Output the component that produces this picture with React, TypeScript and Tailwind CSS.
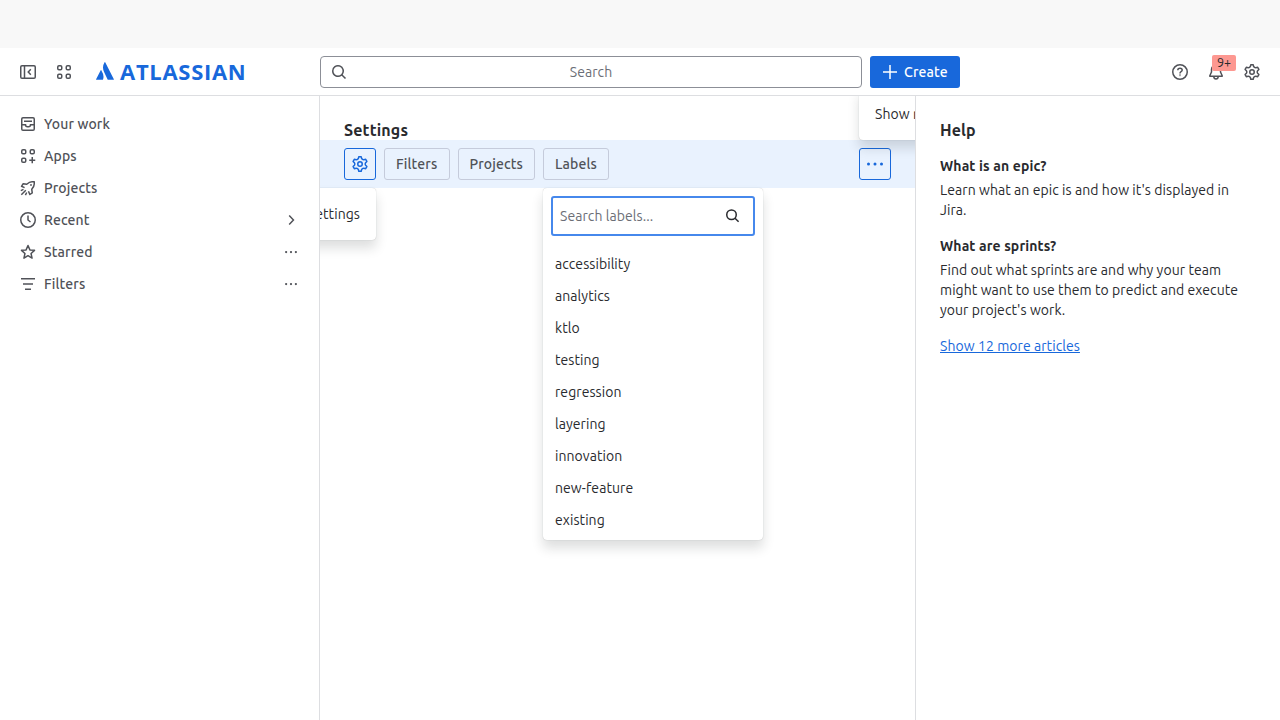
import React from "react";

const SHADOW = "shadow-[0_8px_12px_rgba(30,31,33,0.15),0_0_1px_rgba(30,31,33,0.31)]";

function Icon({ d, size = 16, className = "" }: { d: string; size?: number; className?: string }) {
  return (
    <svg width={size} height={size} viewBox="0 0 16 16" fill="none" className={`shrink-0 ${className}`} aria-hidden="true">
      <path fill="currentColor" fillRule="evenodd" clipRule="evenodd" d={d} />
    </svg>
  );
}

const SEARCH = "M7 2.5a4.5 4.5 0 1 0 0 9 4.5 4.5 0 0 0 0-9M1 7a6 6 0 1 1 10.74 3.68l3.29 3.29-1.06 1.06-3.29-3.29A6 6 0 0 1 1 7";
const ADD = "M7.250 8.750V15h1.500V8.750H15v-1.500H8.750V1h-1.500v6.250H1v1.500z";
const MORE = "M0 8a1.500 1.500 0 1 1 3 0 1.500 1.500 0 0 1-3 0m6.500 0a1.500 1.500 0 1 1 3 0 1.500 1.500 0 0 1-3 0M13 8a1.500 1.500 0 1 1 3 0 1.500 1.500 0 0 1-3 0";
const FILTER = "M15 3.500H1V2h14zM13 8.750H3v-1.500h10zM11 14H5v-1.500h6z";

function Line({ children }: { children: React.ReactNode }) {
  return (
    <svg width="16" height="16" viewBox="0 0 16 16" fill="none" stroke="currentColor" strokeWidth="1.5" className="shrink-0" aria-hidden="true">
      {children}
    </svg>
  );
}

const Gear = () => (
  <Line>
    <path strokeLinejoin="round" d="M6.800.75h2.400L9.600 2.400Q10.200 3.800 11.900 3.700L13.680 3.340 14.880 5.410 13.600 6.700Q12.700 8 13.600 9.300L14.880 10.590 13.680 12.660 11.900 12.300Q10.200 12.200 9.600 13.600L9.200 15.250H6.800L6.400 13.600Q5.800 12.200 4.100 12.300L2.320 12.660 1.120 10.590 2.400 9.300Q3.300 8 2.400 6.700L1.120 5.410 2.320 3.340 4.100 3.700Q5.800 3.800 6.400 2.400Z" />
    <circle cx="8" cy="8" r="2.250" />
  </Line>
);

const Tiles = ({ plus = false }: { plus?: boolean }) => (
  <Line>
    <rect x="1.75" y="1.75" width="4" height="4" rx="1.25" />
    <rect x="10.25" y="1.75" width="4" height="4" rx="1.25" />
    <rect x="1.75" y="10.25" width="4" height="4" rx="1.25" />
    {plus ? <path d="M12.250 9v6.250M9.250 12.125h6" /> : <rect x="10.25" y="10.25" width="4" height="4" rx="1.25" />}
  </Line>
);

const NAV = [
  { label: "Your work", icon: <Line><rect x="1.75" y="1.75" width="12.5" height="12.5" rx="1.250" /><path d="M4 5.250h8M2 8.750h3.500q0 2 2 2h1q2 0 2-2H14" /></Line> },
  { label: "Apps", icon: <Tiles plus /> },
  { label: "Projects", icon: <Line><path strokeLinejoin="round" d="M4.600 7.600 1.500 6.300 3.200 3.700 6.700 4.300Q9.500 1.750 12 1.750h2.250V4q0 2.500-2.500 5.300l.5 3.500-2.400 1.700-1.400-3.200M.8 10.600l2.700-1.200M1.300 14.700l4.500-4.500M5.400 15.200l1.300-2.700" /><circle cx="11" cy="5" r=".3" /></Line> },
  { label: "Recent", icon: <Line><circle cx="8" cy="8" r="7.250" /><path d="M8 3.500V8l2.500 2" /></Line>, end: "chevron" },
  { label: "Starred", icon: <Line><path strokeLinejoin="round" d="m8 1.500 1.900 4.400 4.600.45-3.450 3.150 1 4.600L8 11.700l-4.050 2.400 1-4.600L1.500 6.350l4.600-.45z" /></Line>, end: "more" },
  { label: "Filters", icon: <Icon d={FILTER} />, end: "more" },
];

const LABELS = ["accessibility", "analytics", "ktlo", "testing", "regression", "layering", "innovation", "new-feature", "existing"];

export default function App() {
  return (
    <div className="flex h-[720px] w-[1280px] flex-col overflow-hidden bg-white font-['Ubuntu','Noto_Sans',sans-serif] text-[14px] leading-5 tracking-[0.07px] text-[#292a2e]">
      <div className="h-12 shrink-0 bg-[#f8f8f8]" />
      <header className="flex h-12 shrink-0 items-center border-b border-[#dddee1] px-3 text-[#505258]">
        <div className="flex w-[308px] items-center">
          <span className="flex size-8 items-center justify-center"><Line><rect x=".75" y="1.750" width="14.5" height="12.5" rx="1.250" /><path d="M4.500 2v12M10.800 5.300 8.250 8l2.550 2.700" /></Line></span>
          <span className="ml-1 flex size-8 items-center justify-center"><Tiles /></span>
          <span className="ml-4 flex h-6 items-center text-[#1868db]">
            <svg width="18" height="18" viewBox="0 0 18 18" fill="currentColor" className="mb-0.5" aria-hidden="true"><path d="M5.300 8.200Q5 7.800 4.700 8.300L.1 17.300q-.2.500.3.500h6.200q.3 0 .450-.3 1.500-4-1.750-9.300M8.600.3Q5.600 5.200 8.200 10.300l3.400 7.200q.150.300.45.300h5.500q.5 0 .3-.5L9.200.3Q8.900-.1 8.600.3" /></svg>
            <span className="mb-px ml-1.5 font-['Open_Sans',sans-serif] text-[22px] font-bold leading-6 tracking-[0.7px]">ATLASSIAN</span>
          </span>
        </div>
        <div className="flex h-8 w-[542px] items-center rounded border border-[#8c8f97] px-2.5">
          <Icon d={SEARCH} />
          <span className="flex-1 pr-4 text-center text-[#6b6e76]">Search</span>
        </div>
        <button className="ml-2 flex h-8 w-[90px] items-center gap-1.5 rounded-[3px] bg-[#1868db] pl-3 font-medium tracking-[0.15px] text-white"><Icon d={ADD} />Create</button>
        <div className="ml-auto flex items-center gap-1">
          <span className="flex size-8 items-center justify-center"><Line><circle cx="8" cy="8" r="7.250" /><path d="M5.800 6.300q0-2 2.200-2t2.200 1.800q0 1-1.100 1.600T8 9.400" /><circle cx="8" cy="11.300" r=".2" /></Line></span>
          <span className="relative flex size-8 items-center justify-center">
            <Line><path strokeLinejoin="round" d="M3.500 8V5.500a4.500 4.500 0 0 1 9 0V8l1.700 3.700v.55H1.800v-.55zM5.750 12.500q.2 2.500 2.250 2.500t2.250-2.500" /></Line>
            <span className="absolute -top-[1px] left-3 flex h-4 w-6 items-center justify-center rounded-[2px] bg-[#fd9891] pb-0.5 text-[12.5px] leading-4 text-[#292a2e]">9+</span>
          </span>
          <span className="flex size-8 items-center justify-center"><Gear /></span>
        </div>
      </header>
      <div className="flex min-h-0 flex-1">
        <nav className="w-80 shrink-0 border-r border-[#dddee1] px-3 pt-3 font-medium tracking-[0.13px] text-[#505258]">
          {NAV.map((n) => (
            <div key={n.label} className="flex h-8 items-center gap-2 pl-2 pr-[10px]">
              {n.icon}
              <span className="flex-1">{n.label}</span>
              {n.end === "more" && <Icon d={MORE} size={12} />}
              {n.end === "chevron" && <Line><path d="m8.200 3.500 4.250 4.500-4.250 4.500" /></Line>}
            </div>
          ))}
        </nav>
        <main className="relative w-[595px] shrink-0 overflow-hidden">
          <h1 className="h-11 px-6 pt-6 text-[16px] font-bold leading-5 tracking-[0.15px]">Settings</h1>
          <div className="flex h-12 items-center gap-2 bg-[#e9f2fe] px-6 font-medium tracking-[0.13px] text-[#505258]">
            <button className="flex size-8 items-center justify-center rounded-[3px] border border-[#1868db] text-[#1868db]"><Gear /></button>
            <button className="h-8 w-[66px] rounded-[3px] border border-[#c5cbdb] pl-[11px] text-left">Filters</button>
            <button className="h-8 w-[77px] rounded-[3px] border border-[#c5cbdb] pl-[10.5px] text-left">Projects</button>
            <button className="h-8 w-[66px] rounded-[3px] border border-[#c5cbdb] pl-[11px] text-left">Labels</button>
            <button className="ml-auto flex size-8 items-center justify-center rounded-[3px] border border-[#1868db] text-[#1868db]"><Icon d={MORE} /></button>
          </div>
          <div className={`absolute right-[539px] top-[92px] h-[52px] rounded bg-white px-4 py-4 whitespace-nowrap ${SHADOW}`}>Edit settings</div>
          <div className={`absolute left-[539px] -top-2 h-[52px] rounded bg-white px-4 py-4 whitespace-nowrap ${SHADOW}`}>Show more</div>
          <div className={`absolute left-[223px] top-[92px] h-[352px] w-[220px] rounded bg-white p-2 ${SHADOW}`}>
            <div className="flex h-10 w-[204px] items-center rounded-[3px] border-2 border-[#4688ec] pl-[7px] pr-[13px] text-[#6b6e76]">
              <span className="flex-1">Search labels...</span>
              <svg width="14" height="14" viewBox="0 0 14 14" fill="none" stroke="currentColor" strokeWidth="1.5" className="text-[#292a2e]" aria-hidden="true"><circle cx="5.500" cy="5.750" r="4.750" /><path d="m9 9.250 3.600 3.500" /></svg>
            </div>
            <ul className="pt-3">
              {LABELS.map((l) => <li key={l} className="flex h-8 items-center pl-1">{l}</li>)}
            </ul>
          </div>
        </main>
        <aside className="flex-1 border-l border-[#dddee1] px-6 pt-6">
          <h2 className="text-[16px] font-bold tracking-[0.15px]">Help</h2>
          <h3 className="mt-4 font-bold tracking-[0.13px]">What is an epic?</h3>
          <p className="mt-1">Learn what an epic is and how it's displayed in<br />Jira.</p>
          <h3 className="mt-4 font-bold tracking-[0.13px]">What are sprints?</h3>
          <p className="mt-1 whitespace-nowrap">Find out what sprints are and why your team<br />might want to use them to predict and execute<br />your project's work.</p>
          <a className="mt-4 block text-[#1868db] underline">Show 12 more articles</a>
        </aside>
      </div>
    </div>
  );
}
